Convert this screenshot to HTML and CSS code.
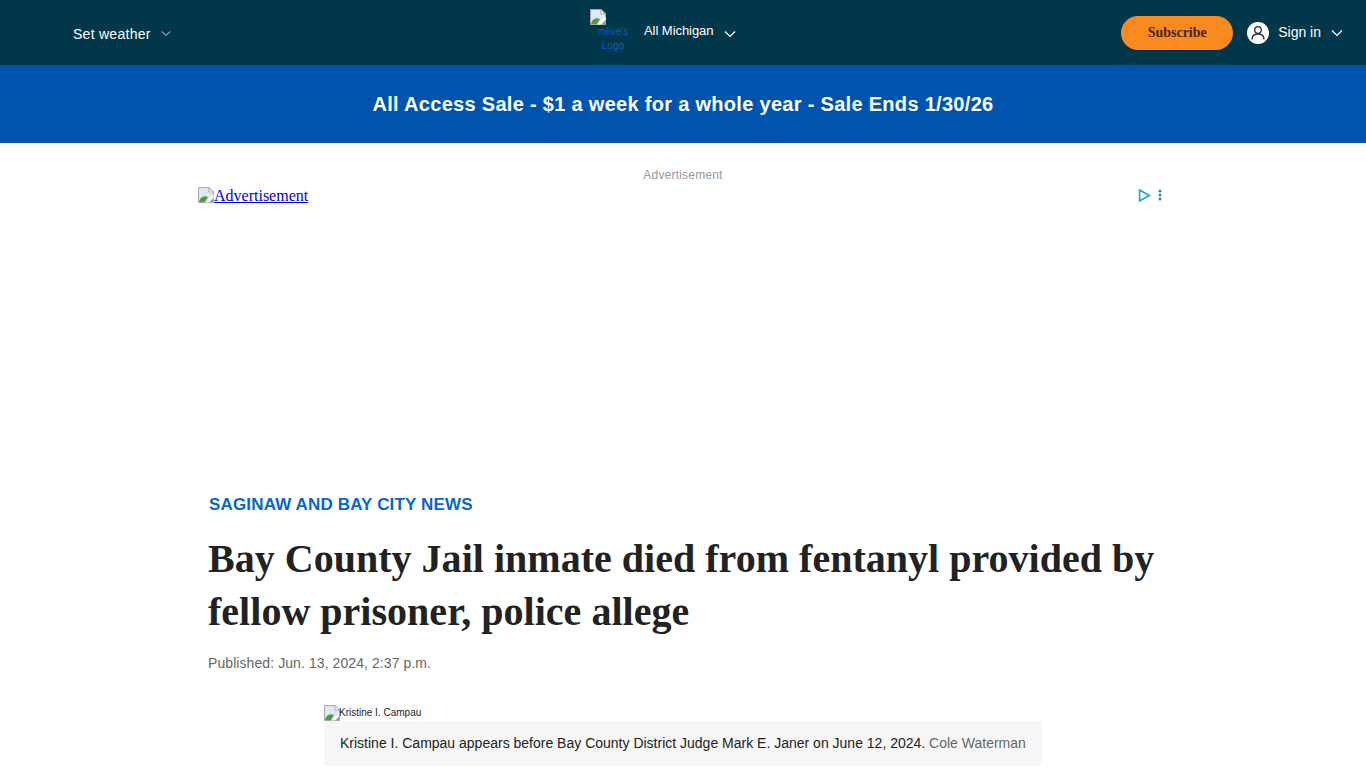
FILE: index.html
```html
<!DOCTYPE html>
<html lang="en">
<head>
    <meta charset="UTF-8">
    <meta name="viewport" content="width=device-width, initial-scale=1.0">
    <title>Bay County Jail inmate died from fentanyl provided by fellow prisoner, police allege</title>
    <link rel="stylesheet" href="styles.css">
</head>
<body>
    <svg class="defs" width="0" height="0">
        <symbol id="broken" viewBox="0 0 16 16">
            <path d="M.5.5H11L15.500 5v10.500H.5z" fill="#dfe6f6" stroke="#a9a9a9"/>
            <path d="M11 .5V5h4.500z" fill="#fff" stroke="#a9a9a9"/>
            <path d="M1 15c1-5 5-7 9-5l-3 5z" fill="#4f9e34"/>
            <path d="M7 15.500l8.500-8v3l-5 5z" fill="#fff"/>
            <path d="M12 15l3-3.500V15z" fill="#6fb454"/>
        </symbol>
        <symbol id="chevron" viewBox="0 0 12 8">
            <path d="M1 1.500l5 5 5-5" fill="none" stroke="currentColor" stroke-width="1.200"/>
        </symbol>
    </svg>

    <!-- Top nav -->
    <header class="topbar">
        <div class="weather">
            <span>Set weather</span>
            <svg class="chevron small"><use href="#chevron"/></svg>
        </div>
        <div class="brand">
            <a class="logo" href="#">
                <svg class="broken"><use href="#broken"/></svg>
                <span class="logo-alt">mlive's Logo</span>
            </a>
            <span class="region">All Michigan</span>
            <svg class="chevron"><use href="#chevron"/></svg>
        </div>
        <div class="account">
            <button class="subscribe">Subscribe</button>
            <svg class="avatar" viewBox="0 0 22 22">
                <circle cx="11" cy="11" r="11" fill="#fff"/>
                <circle cx="11" cy="8" r="3.300" fill="none" stroke="#1d2b33" stroke-width="1.300"/>
                <path d="M5 17.500c0-3.500 2.500-5.500 6-5.500s6 2 6 5.500" fill="none" stroke="#1d2b33" stroke-width="1.300"/>
            </svg>
            <span class="signin">Sign in</span>
            <svg class="chevron"><use href="#chevron"/></svg>
        </div>
    </header>

    <div class="promo">All Access Sale - $1 a week for a whole year - Sale Ends 1/30/26</div>

    <!-- Ad slot -->
    <section class="ad">
        <div class="ad-label">Advertisement</div>
        <div class="ad-frame">
            <a class="ad-link" href="#"><svg class="broken"><use href="#broken"/></svg>Advertisement</a>
            <div class="ad-choices">
                <svg class="ad-play" viewBox="0 0 12 12"><path d="M1.500 1l9 5-9 5z" fill="none" stroke="#18a5c9" stroke-width="1.500"/></svg>
                <svg class="ad-dots" viewBox="0 0 4 12"><circle cx="2" cy="2" r="1.500" fill="#2a8ca8"/><circle cx="2" cy="6" r="1.500" fill="#2a8ca8"/><circle cx="2" cy="10" r="1.500" fill="#2a8ca8"/></svg>
            </div>
        </div>
    </section>

    <!-- Article -->
    <main class="article">
        <a class="section-link" href="#">SAGINAW AND BAY CITY NEWS</a>
        <h1>Bay County Jail inmate died from fentanyl provided by fellow prisoner, police allege</h1>
        <p class="published">Published: Jun. 13, 2024, 2:37 p.m.</p>
        <figure class="lead">
            <div class="lead-img"><svg class="broken"><use href="#broken"/></svg><span class="lead-alt">Kristine I. Campau</span></div>
            <figcaption>Kristine I. Campau appears before Bay County District Judge Mark E. Janer on June 12, 2024. <span class="credit">Cole Waterman</span></figcaption>
        </figure>
    </main>
</body>
</html>
```

FILE: styles.css
```css
html, body {
    height: 768px;
    overflow: hidden;
}

body {
    margin: 0;
    padding: 0;
    background: #fff;
    font-family: "Liberation Sans", Arial, sans-serif;
    color: #222;
}

.defs {
    position: absolute;
}

.broken {
    width: 16px;
    height: 16px;
    flex: none;
}

.chevron {
    width: 12px;
    height: 8px;
    color: #fff;
}

.chevron.small {
    width: 10px;
    height: 7px;
    color: #dce8ec;
}

/* Top nav */
.topbar {
    display: grid;
    grid-template-columns: 590px auto 1fr;
    height: 65px;
    background: #00374b;
    color: #fff;
    align-items: center;
}

.weather {
    display: flex;
    align-items: center;
    gap: 10px;
    padding: 2px 0 0 73px;
    font-size: 14px;
    letter-spacing: 0.27px;
}

.brand {
    display: flex;
    align-items: flex-start;
    height: 65px;
    font-size: 13px;
}

.logo {
    display: block;
    width: 46px;
    margin-top: 9px;
    text-decoration: none;
    color: #0a5fc0;
    font-size: 10px;
    line-height: 14px;
    text-align: center;
}

.logo .broken {
    display: block;
}

.logo-alt {
    display: block;
    letter-spacing: 0.1px;
}

.region {
    margin: 23px 0 0 8px;
    line-height: 15px;
    letter-spacing: -0.05px;
}

.brand .chevron {
    margin: 30px 0 0 10px;
}

.account {
    display: flex;
    justify-content: flex-end;
    align-items: center;
    padding-right: 23px;
}

.subscribe {
    width: 112px;
    height: 34px;
    border: none;
    border-radius: 17px;
    background: #f98a1f;
    color: #4a2406;
    font-family: "Liberation Serif", "Times New Roman", serif;
    font-size: 14px;
    font-weight: bold;
    padding: 0;
    margin-right: 14px;
}

.avatar {
    width: 22px;
    height: 22px;
    margin-right: 9px;
}

.signin {
    font-size: 14px;
    margin: 0 10px 2px 0;
}

/* Promo banner */
.promo {
    height: 78px;
    line-height: 78px;
    background: #0054ae;
    color: #fff;
    text-align: center;
    font-size: 20px;
    font-weight: bold;
    letter-spacing: 0.3px;
}

/* Ad */
.ad {
    width: 970px;
    height: 336px;
    margin: 0 auto;
    padding-top: 25px;
    box-sizing: border-box;
}

.ad-label {
    font-size: 12px;
    line-height: 14px;
    color: #999;
    text-align: center;
    letter-spacing: 0.2px;
}

.ad-frame {
    display: flex;
    justify-content: space-between;
    margin-top: 5px;
}

.ad-link {
    font-family: "Liberation Serif", "Times New Roman", serif;
    font-size: 16px;
    line-height: 18px;
    color: #00e;
}

.ad-link .broken {
    vertical-align: -2px;
}

.ad-choices {
    display: flex;
    align-items: center;
    gap: 7px;
    height: 16px;
    padding-right: 6px;
}

.ad-play {
    width: 13px;
    height: 13px;
}

.ad-dots {
    width: 4px;
    height: 12px;
}

/* Article */
.article {
    width: 950px;
    margin: 0 auto;
}

.section-link {
    display: block;
    margin: 16px 0 0 1px;
    font-size: 17px;
    line-height: 20px;
    font-weight: bold;
    letter-spacing: 0.16px;
    color: #0766c6;
    text-decoration: none;
}

h1 {
    margin: 17px 0 0;
    font-family: "Liberation Serif", "Times New Roman", serif;
    font-size: 40px;
    line-height: 53px;
    font-weight: bold;
    color: #222;
    letter-spacing: 0.02px;
}

.published {
    margin: 17px 0 0;
    font-size: 14px;
    line-height: 16px;
    color: #666;
    letter-spacing: 0.08px;
}

.lead {
    width: 718px;
    margin: 34px 0 0 116px;
}

.lead-img {
    display: flex;
    height: 16px;
    font-size: 10px;
    line-height: 16px;
    color: #222;
}

.lead-alt {
    margin-left: -1px;
}

figcaption {
    height: 45px;
    line-height: 45px;
    padding-left: 16px;
    background: #f6f6f6;
    font-size: 14px;
    color: #222;
    white-space: nowrap;
}

.credit {
    color: #666;
}
```
